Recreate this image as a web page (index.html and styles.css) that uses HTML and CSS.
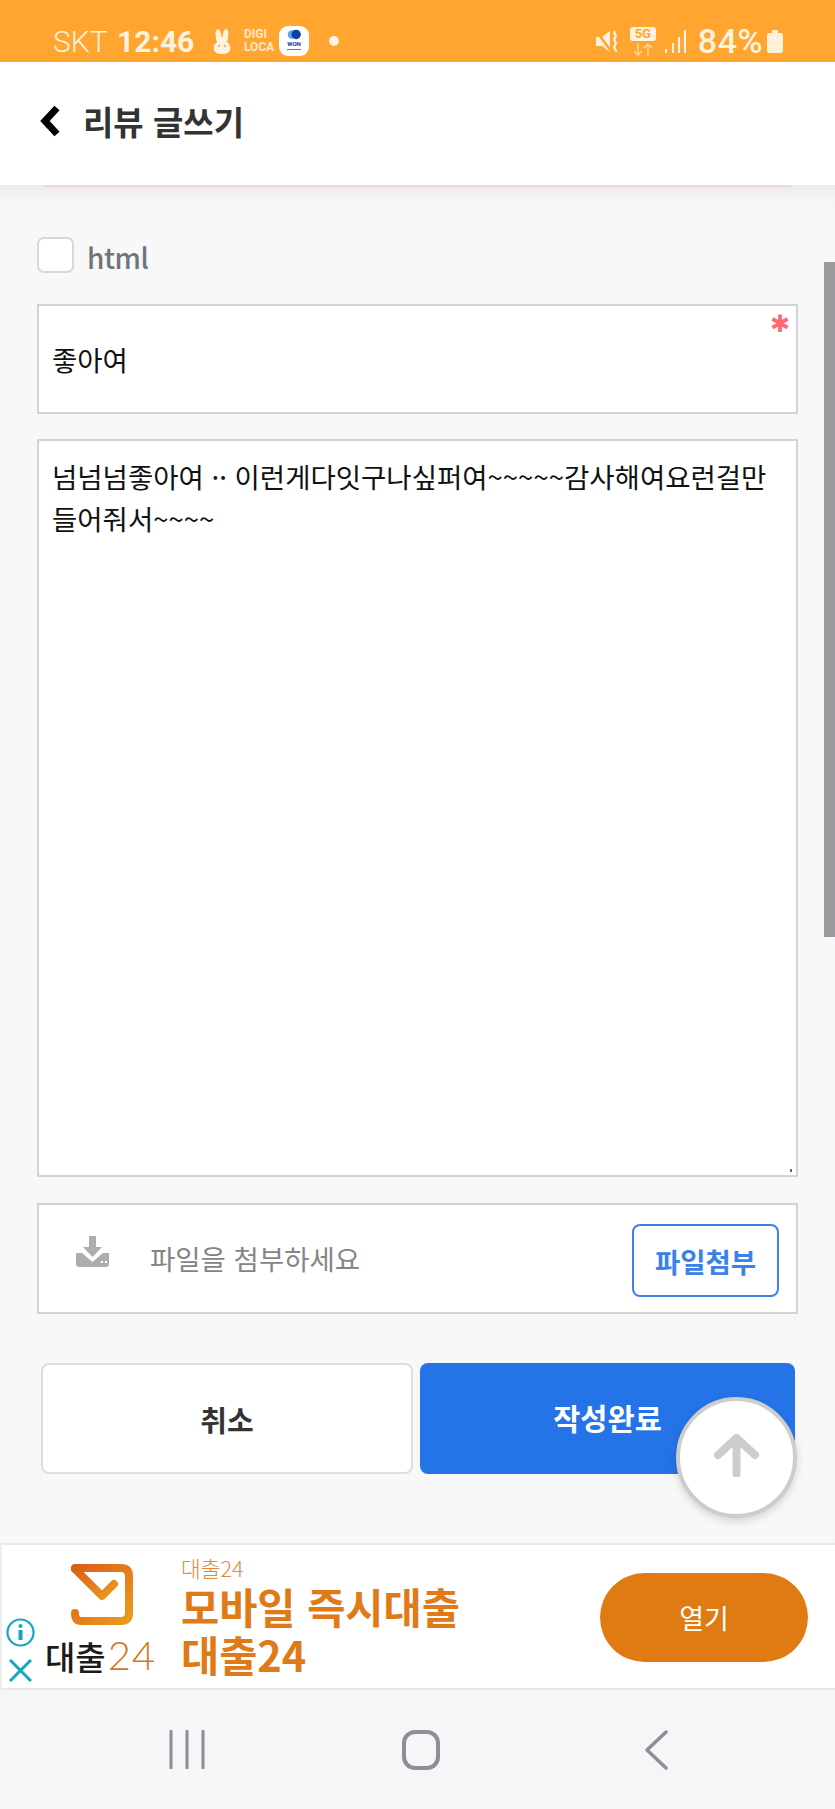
FILE: index.html
```html
<!DOCTYPE html>
<html lang="ko">
<head>
<meta charset="utf-8">
<title>리뷰 글쓰기</title>
<link rel="stylesheet" href="styles.css">
</head>
<body>
<div class="page">
  <div class="status">
    <span class="carrier">SKT</span>
    <span class="clock">12:46</span>
    <svg class="bunny" viewBox="0 0 20 26"><path d="M5 14C3 8 3 1 6 1c2 0 3 4 3.500 8h1C11 5 12 1 14 1c3 0 3 7 1 13 3 2 4 5 3 8-1 3-4 4-8 4s-7-1-8-4c-1-3 0-6 3-8z" fill="#fff3df"/><circle cx="7" cy="18" r="1" fill="#d9a860"/><circle cx="13" cy="18" r="1" fill="#d9a860"/></svg>
    <span class="digi">DIGI<br>LOCA</span>
    <span class="won">
      <svg class="won-mark" viewBox="0 0 20 12"><circle cx="7" cy="6" r="5" fill="#58a7e8"/><circle cx="12" cy="6" r="5.500" fill="#0c3f9e"/></svg>
      <span class="won-text">WON</span>
      <span class="won-sub"></span>
    </span>
    <span class="dot"></span>
    <span class="status-right">
      <svg class="mute" viewBox="0 0 24 23"><path d="M0 7h6l8-6v21l-8-6H0z" fill="#fff3df"/><path d="M1 2l14 19" stroke="#ffa530" stroke-width="2.500"/><path d="M19 1c-3 3 3 4 0 7s3 4 0 7 2 4 1 7" fill="none" stroke="#fff3df" stroke-width="2.200"/></svg>
      <span class="net">
        <span class="fiveg">5G</span>
        <svg class="net-arrows" viewBox="0 0 26 13"><path d="M8 0v12M4 8l4 4 4-4M18 13V1M14 5l4-4 4 4" fill="none" stroke="#ffd9a0" stroke-width="1.500"/></svg>
      </span>
      <svg class="signal" viewBox="0 0 21 23"><path d="M1 19v4M8 13v10M14 7v16M20 0v23" stroke="#fff3df" stroke-width="2.200"/></svg>
      <span class="batt-text">84%</span>
      <svg class="battery" viewBox="0 0 16 23"><path d="M5 0h6v3h3a2 2 0 0 1 2 2v16a2 2 0 0 1-2 2H2a2 2 0 0 1-2-2V5a2 2 0 0 1 2-2h3z" fill="#fff0d8"/></svg>
    </span>
  </div>

  <header class="topbar">
    <svg class="back" viewBox="0 0 22 32"><path d="M18 3L6 16l12 13" fill="none" stroke="#000" stroke-width="7"/></svg>
    <h1 class="title">리뷰 글쓰기</h1>
  </header>

  <main class="main">
    <div class="rule"></div>
    <form class="form">
      <label class="check-row">
        <span class="check"></span>
        <span class="check-label">html</span>
      </label>
      <div class="field field-title">좋아여<span class="required">✱</span></div>
      <div class="field field-body">넘넘넘좋아여 ·· 이런게다잇구나싶퍼여~~~~~감사해여요런걸만 들어줘서~~~~<span class="grip"></span></div>
      <div class="field field-file">
        <svg class="dl" viewBox="0 0 33 31"><path d="M13 0h7v11h6l-9.500 10L7 11h6z" fill="#adadad"/><path d="M0 17h6l10.500 9L27 17h6v11a3 3 0 0 1-3 3H3a3 3 0 0 1-3-3z" fill="#adadad"/><path d="M25 26h2M29 26h2" stroke="#fff" stroke-width="2"/></svg>
        <span class="file-hint">파일을 첨부하세요</span>
        <span class="file-btn">파일첨부</span>
      </div>
      <div class="actions">
        <span class="btn btn-cancel">취소</span>
        <span class="btn btn-submit">작성완료</span>
      </div>
    </form>
  </main>

  <div class="ad">
    <div class="ad-marks">
      <svg class="ad-info" viewBox="0 0 29 29"><circle cx="14.500" cy="14.500" r="13" fill="none" stroke="#19a6bd" stroke-width="2.200"/><circle cx="14.500" cy="8" r="2" fill="#19a6bd"/><rect x="12.500" y="12" width="4" height="10" fill="#19a6bd"/></svg>
      <svg class="ad-x" viewBox="0 0 23 23"><path d="M1 1l21 21M22 1L1 22" stroke="#19a6bd" stroke-width="3"/></svg>
    </div>
    <div class="ad-brand">
      <svg class="ad-logo" viewBox="0 0 62 63">
        <defs><linearGradient id="lg" x1="0" y1="0" x2="1" y2="1"><stop offset="0" stop-color="#dc5f18"/><stop offset="1" stop-color="#ec9a1c"/></linearGradient></defs>
        <path d="M4 5H50Q58 5 58 13V50Q58 58 50 58H10Q4 58 4 50" fill="none" stroke="url(#lg)" stroke-width="8" stroke-linecap="round"/>
        <path d="M4 6L31 33 43 21" fill="none" stroke="url(#lg)" stroke-width="8" stroke-linecap="round" stroke-linejoin="round"/>
      </svg>
      <div class="ad-word">대출<span class="ad-num">24</span></div>
    </div>
    <div class="ad-copy">
      <div class="ad-small">대출24</div>
      <div class="ad-head">모바일 즉시대출</div>
      <div class="ad-head">대출24</div>
    </div>
    <span class="ad-open">열기</span>
  </div>

  <nav class="navbar">
    <svg class="nav-recent" viewBox="0 0 36 39"><path d="M2 1v37M18 1v37M34 1v37" stroke="#8e8f93" stroke-width="3" stroke-linecap="round"/></svg>
    <svg class="nav-home" viewBox="0 0 38 40"><rect x="2" y="2" width="34" height="36" rx="11" fill="none" stroke="#8e8f93" stroke-width="4"/></svg>
    <svg class="nav-back" viewBox="0 0 24 40"><path d="M22 2L3 20l19 18" fill="none" stroke="#8e8f93" stroke-width="3.500" stroke-linecap="round" stroke-linejoin="round"/></svg>
  </nav>

  <div class="scrollbar"></div>
  <div class="fab">
    <svg class="fab-arrow" viewBox="0 0 45 43"><path d="M22.500 40V4M4 21L22.500 4 41 21" fill="none" stroke="#cdcdcd" stroke-width="8" stroke-linecap="round" stroke-linejoin="round"/></svg>
  </div>
</div>
</body>
</html>
```

FILE: styles.css
```css
* { box-sizing: border-box; }
html, body { margin: 0; padding: 0; }
body { font-family: "Noto Sans CJK KR", "Noto Sans", sans-serif; background: #f8f8f9; }
.page { position: relative; width: 835px; height: 1809px; display: flex; flex-direction: column; overflow: hidden; }

.status { height: 62px; flex: none; background: #ffa530; color: #fff3df; display: flex; align-items: center; padding: 20px 52px 0 53px; font-family: Roboto, sans-serif; }
.carrier { font-size: 30px; font-weight: 300; width: 64px; }
.clock { font-size: 30px; font-weight: 700; width: 95px; }
.bunny { width: 20px; height: 26px; }
.digi { font-size: 12px; line-height: 13px; font-weight: 700; margin-left: 12px; color: #ffe8c6; width: 35px; }
.won { width: 30px; height: 30px; background: #fff; border-radius: 9px; display: flex; flex-direction: column; align-items: center; padding-top: 3px; }
.won-mark { width: 17px; height: 11px; flex: none; }
.won-text { font-size: 6px; line-height: 8px; font-weight: 700; color: #123b8c; }
.won-sub { width: 14px; height: 1px; background: #777; margin-top: 1px; }
.dot { width: 10px; height: 10px; border-radius: 50%; background: #fff3df; margin-left: 20px; }
.status-right { margin-left: auto; display: flex; align-items: center; }
.mute { width: 24px; height: 23px; }
.net { display: flex; flex-direction: column; align-items: center; margin-left: 10px; width: 26px; }
.fiveg { width: 26px; height: 14px; border-radius: 3px; background: #fff3df; color: #ffa530; font-size: 13px; line-height: 14px; font-weight: 700; text-align: center; }
.net-arrows { width: 26px; height: 13px; margin-top: 2px; }
.signal { width: 21px; height: 23px; margin-left: 9px; }
.batt-text { font-size: 34px; font-weight: 500; margin-left: 12px; letter-spacing: .5px; line-height: 36px; }
.battery { width: 16px; height: 23px; margin-left: 4px; }

.topbar { height: 123px; flex: none; background: #fff; display: flex; align-items: center; padding: 0 0 6px 39px; position: relative; z-index: 1; }
.back { width: 22px; height: 32px; }
.title { margin: 0 0 0 22px; font-size: 33px; line-height: 40px; font-weight: 700; color: #333; }

.main { flex: 1; box-shadow: inset 0 22px 20px -16px #e6e6e6; }
.rule { height: 2px; margin: 0 44px; background: #f3d6dc; }
.form { padding: 0 37px; }
.check-row { display: flex; align-items: center; margin-top: 50px; height: 36px; }
.check { width: 37px; height: 36px; border: 2px solid #d5d8e2; border-radius: 7px; background: #fff; }
.check-label { margin-left: 13px; font-size: 28px; line-height: 36px; font-weight: 500; color: #6f7579; letter-spacing: -.5px; padding-top: 4px; }

.field { position: relative; background: #fff; border: 2px solid #d0d3dc; color: #111; font-size: 27.500px; }
.field-title { height: 110px; margin-top: 31px; padding: 0 13px; display: flex; align-items: center; }
.required { position: absolute; top: 4px; right: 6px; color: #ff6a72; font-size: 24px; line-height: 28px; font-family: "DejaVu Sans", sans-serif; }
.field-body { height: 738px; margin-top: 25px; padding: 14px 13px; line-height: 42px; }
.grip { position: absolute; right: 4px; bottom: 3px; width: 2px; height: 3px; background: #666; }
.field-file { height: 111px; margin-top: 26px; padding: 0 17px 0 37px; display: flex; align-items: center; }
.dl { width: 33px; height: 31px; margin-top: -14px; }
.file-hint { margin-left: 41px; font-size: 27.500px; color: #858585; margin-top: -2px; }
.file-btn { margin-left: auto; width: 147px; height: 73px; border: 2px solid #3b82e6; border-radius: 8px; background: #fff; color: #3b82e6; font-size: 27.500px; font-weight: 700; display: flex; align-items: center; justify-content: center; margin-top: 4px; }

.actions { display: flex; gap: 7px; margin: 49px 3px 0 4px; }
.btn { height: 111px; border-radius: 8px; display: flex; align-items: center; justify-content: center; font-weight: 700; }
.btn-cancel { flex: 0 0 372px; border: 2px solid #dedede; background: #fff; color: #333; font-size: 29px; }
.btn-submit { flex: 1; background: #2474e8; color: #fff; font-size: 29.500px; padding-bottom: 4px; }

.ad { height: 147px; flex: none; background: #fff; border-top: 2px solid #e9e9e9; border-bottom: 2px solid #e9e9e9; border-left: 2px solid #eee; display: flex; position: relative; }
.ad-marks { width: 44px; display: flex; flex-direction: column; align-items: flex-start; padding: 73px 0 0 4px; flex: none; }
.ad-info { width: 29px; height: 29px; }
.ad-x { width: 23px; height: 23px; margin: 12px 0 0 3px; }
.ad-brand { width: 135px; flex: none; display: flex; flex-direction: column; padding: 18px 0 0 25px; }
.ad-logo { width: 62px; height: 63px; flex: none; }
.ad-word { margin: 8px 0 0 -26px; font-size: 33px; line-height: 42px; font-weight: 500; color: #1d1a1a; white-space: nowrap; }
.ad-num { font-family: Lato, sans-serif; font-weight: 300; color: #d4761c; font-size: 40px; line-height: 42px; margin-left: 2px; letter-spacing: 1px; }
.ad-copy { flex: none; color: #df7a17; padding-top: 9px; }
.ad-small { font-size: 21.500px; line-height: 28px; font-weight: 300; color: #e08a3a; }
.ad-head { font-size: 41.500px; line-height: 48px; font-weight: 700; }
.ad-open { margin: 28px 27px 0 auto; width: 208px; height: 89px; border-radius: 45px; background: #e07b14; color: #fff; font-size: 27px; display: flex; align-items: center; justify-content: center; }

.navbar { height: 119px; flex: none; background: #f6f6f8; position: relative; display: flex; align-items: flex-start; padding: 40px 0 0 169px; }
.nav-recent { width: 36px; height: 39px; }
.nav-home { width: 38px; height: 40px; margin-left: 197px; }
.nav-back { width: 24px; height: 40px; margin-left: 204px; }

.scrollbar { position: absolute; left: 824px; top: 262px; width: 11px; height: 675px; background: #9c9ca0; }
.fab { position: absolute; left: 676px; top: 1397px; width: 121px; height: 121px; border-radius: 50%; background: #fff; border: 4px solid #cdcdcd; box-shadow: 0 3px 8px rgba(0,0,0,.15); display: flex; align-items: center; justify-content: center; }
.fab-arrow { width: 45px; height: 43px; margin-bottom: 4px; }
```
